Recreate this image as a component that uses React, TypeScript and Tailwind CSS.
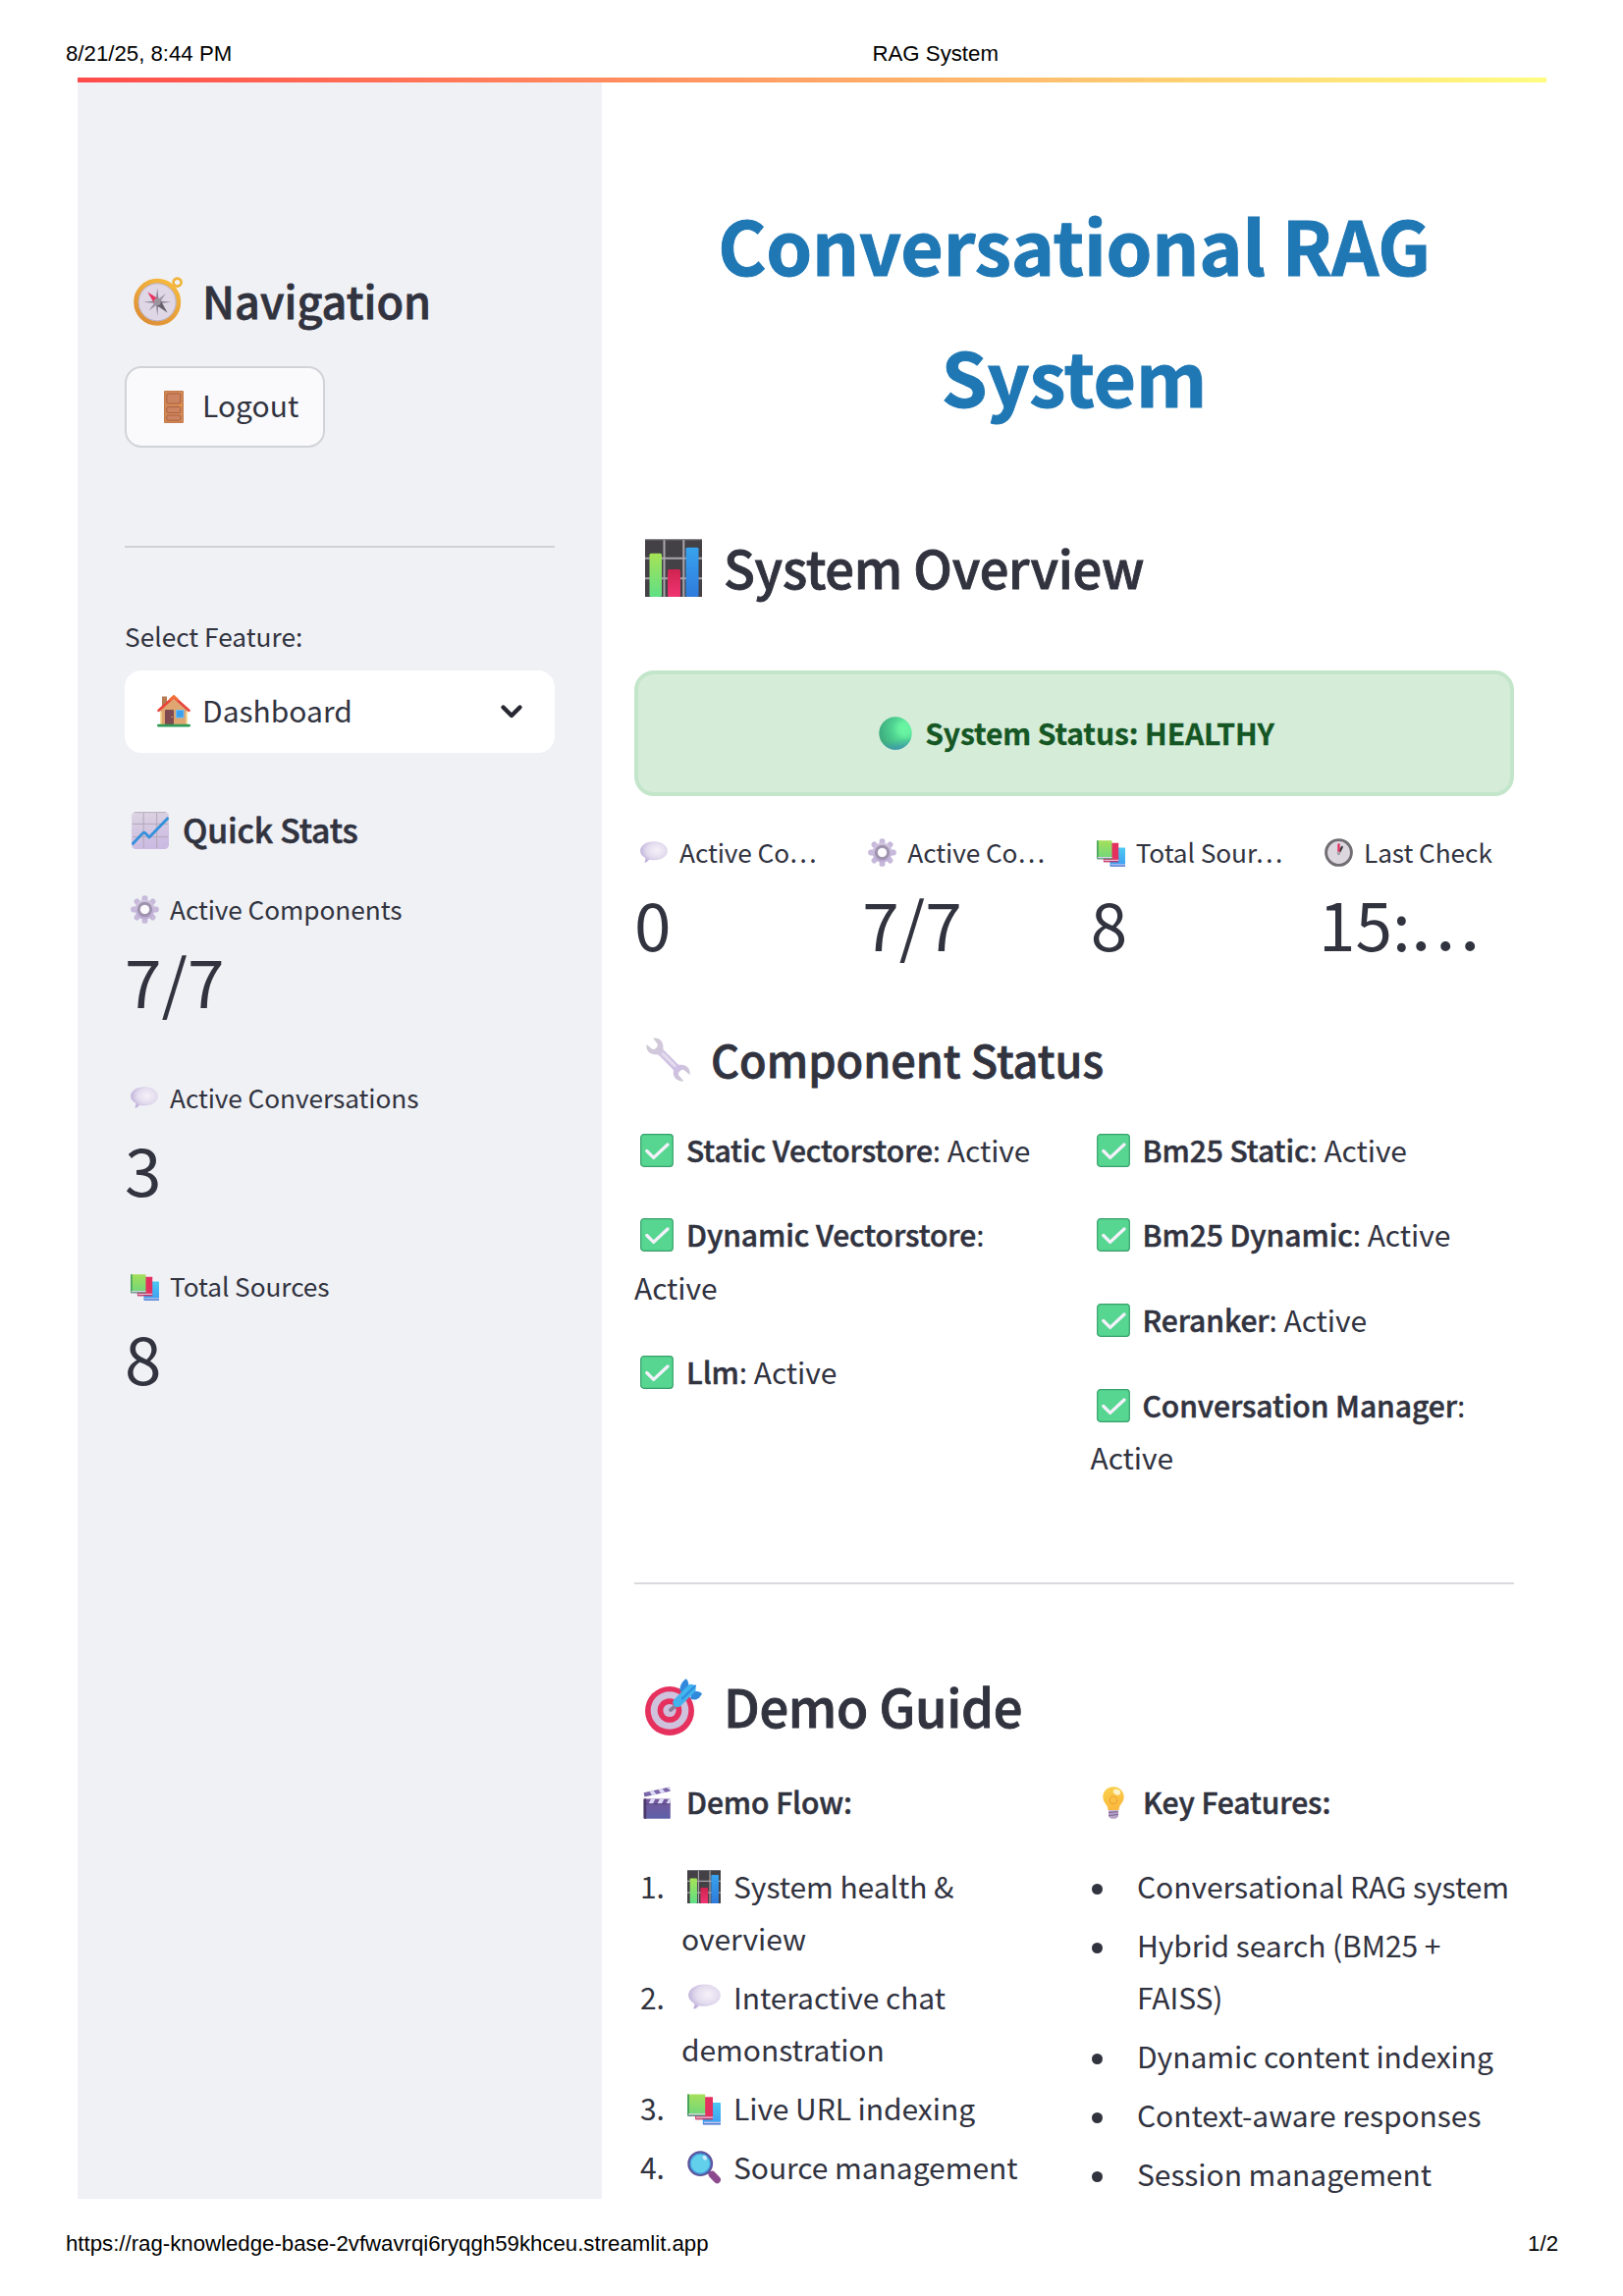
import React from "react";

type IconProps = { className?: string };

function Compass({ className }: IconProps) {
  return (
    <svg viewBox="0 0 50 50" className={className} fill="none">
      <defs>
        <linearGradient id="cmp" x1="0.8" y1="0" x2="0.2" y2="1">
          <stop offset="0" stopColor="#f6b93c" />
          <stop offset="1" stopColor="#dd8d35" />
        </linearGradient>
      </defs>
      <circle cx="44.6" cy="5.6" r="4" stroke="#f0b336" strokeWidth="2.6" />
      <circle cx="24.2" cy="25.8" r="21.7" fill="#dfd6e6" stroke="url(#cmp)" strokeWidth="4.6" />
      <circle cx="24.2" cy="25.8" r="19" stroke="#b9aebd" strokeWidth="1" />
      <path d="M24.2 11.5l1.6 12.7L24.2 40l-1.6-15.8zM10 25.8l14.2-1.5 14.2 1.5-14.2 1.5z" fill="#8f8798" />
      <path d="M33 17l-7.4 10.4L15.5 34.6l7-10.2z" fill="#a29aac" />
      <path d="M14.3 15.6l12.3 7.6-5 4.8z" fill="#e8345f" />
      <path d="M34.5 36.5l-12.6-8.4 5.4-4.8z" fill="#66616c" />
      <circle cx="24.2" cy="25.4" r="3.6" fill="#9b949f" />
    </svg>
  );
}

function Door({ className }: IconProps) {
  return (
    <svg viewBox="0 0 20 33" className={className} fill="none">
      <rect x="0" y="0" width="20" height="33" rx="1" fill="#d58a58" />
      <rect x="0.6" y="0.6" width="18.8" height="31.8" rx="0.8" stroke="#bf774b" strokeWidth="0.9" />
      <g fill="#cb8360" stroke="#a9613f" strokeWidth="1">
        <rect x="2.8" y="3" width="14" height="10" rx="1" />
        <rect x="2.8" y="16.5" width="14" height="6" rx="1" />
        <rect x="2.8" y="25" width="14" height="5.2" rx="1" />
      </g>
      <circle cx="16.8" cy="15" r="1.1" fill="#f09a2e" />
    </svg>
  );
}

function House({ className }: IconProps) {
  return (
    <svg viewBox="0 0 34 33" className={className} fill="none">
      <rect x="5" y="1.5" width="5" height="12" fill="#b77c52" />
      <path d="M3.5 14L17 2l13.5 12v17h-27z" fill="#dfa672" />
      <rect x="3" y="17" width="1.6" height="13" fill="#f4dfa0" />
      <rect x="29.4" y="17" width="1.6" height="13" fill="#f4dfa0" />
      <path d="M1.6 15.8L17 2l15.4 13.8" stroke="#e8453c" strokeWidth="2.6" strokeLinecap="round" strokeLinejoin="round" />
      <path d="M13.5 4.5L17 1.4l3.5 3.1" stroke="#f3703c" strokeWidth="2.6" strokeLinecap="round" />
      <rect x="8" y="15" width="9" height="15" rx="0.8" fill="#7d4a52" />
      <circle cx="15.2" cy="22.5" r="0.8" fill="#d6a44e" />
      <rect x="19.5" y="15.5" width="7.5" height="7.5" fill="#3ba0f2" stroke="#6ac3fb" strokeWidth="0.8" />
      <rect x="0" y="29.8" width="34" height="2.6" rx="1.3" fill="#2f9a55" />
    </svg>
  );
}

function Trend({ className }: IconProps) {
  return (
    <svg viewBox="0 0 38 38" className={className} fill="none">
      <defs>
        <linearGradient id="trd" x1="0" y1="0" x2="0.2" y2="1">
          <stop offset="0" stopColor="#ddd5e2" />
          <stop offset="1" stopColor="#cbbbe2" />
        </linearGradient>
      </defs>
      <rect width="38" height="38" rx="4.5" fill="url(#trd)" />
      <path d="M12.2 1v36M25.7 1v36M1 12.4h36M1 25.6h36" stroke="#b2a8b8" strokeWidth="1" />
      <path d="M3 .6h32" stroke="#b9afbe" strokeWidth="1" />
      <path d="M.6 33.2L11.6 21.6q1.2-1 2.4.2l4 4.2 19.4-20" stroke="#3391dc" strokeWidth="2.8" strokeLinejoin="round" />
    </svg>
  );
}

function Gear({ className }: IconProps) {
  const teeth = [0, 45, 90, 135, 180, 225, 270, 315];
  return (
    <svg viewBox="0 0 29 29" className={className} fill="none">
      <defs>
        <linearGradient id="ger" x1="0.5" y1="0" x2="0.5" y2="1">
          <stop offset="0" stopColor="#d3c9e0" />
          <stop offset="1" stopColor="#bcaad6" />
        </linearGradient>
      </defs>
      <g fill="#c6b9da">
        {teeth.map((a) => (
          <rect key={a} x="11.6" y="0.2" width="5.8" height="8" rx="2.6" transform={`rotate(${a} 14.5 14.5)`} />
        ))}
      </g>
      <circle cx="14.5" cy="14.5" r="10" fill="url(#ger)" />
      <circle cx="14.5" cy="14.5" r="6.2" stroke="#a093ae" strokeWidth="3" />
      <circle cx="14.5" cy="14.5" r="4.6" fill="#fdfbfd" />
    </svg>
  );
}

function Bubble({ className }: IconProps) {
  return (
    <svg viewBox="0 0 28 22" className={className} fill="none">
      <defs>
        <radialGradient id="bub" cx="0.6" cy="0.42" r="0.62">
          <stop offset="0" stopColor="#f5f2f9" />
          <stop offset="0.6" stopColor="#e2dbee" />
          <stop offset="1" stopColor="#bfb0d9" />
        </radialGradient>
      </defs>
      <path d="M14 .3C21.8 .3 27.9 4.5 27.9 9.8S21.8 19.3 14 19.3c-1.7 0-3.2-.2-4.6-.5-1 1-2.6 2.6-4.5 2.9-.5 0-.6-.5-.3-.9.6-.9.8-2.3.7-3.7C2 15.3.1 12.8.1 9.8.1 4.5 6.2.3 14 .3z" fill="url(#bub)" />
    </svg>
  );
}

function Books({ className }: IconProps) {
  return (
    <svg viewBox="0 0 29 27" className={className} fill="none">
      <defs>
        <linearGradient id="bkg" x1="0" y1="0" x2="0" y2="1">
          <stop offset="0" stopColor="#a5e05a" />
          <stop offset="1" stopColor="#6fd67c" />
        </linearGradient>
        <linearGradient id="bkb" x1="0" y1="0" x2="0" y2="1">
          <stop offset="0" stopColor="#4cc9f2" />
          <stop offset="1" stopColor="#3f9df2" />
        </linearGradient>
      </defs>
      <rect x="13.5" y="7.5" width="15.5" height="19" rx="0.5" fill="url(#bkb)" />
      <path d="M14.5 24.3h14.5v1.2H14.5z" fill="#cfc6ef" />
      <path d="M13.8 26.2H29" stroke="#4f6cc4" strokeWidth="0.9" />
      <rect x="6.8" y="2.7" width="15.4" height="19" rx="0.5" fill="#e4305f" />
      <path d="M7.5 19.8h14.7v1.2H7.5z" fill="#e5bcd6" />
      <path d="M7 21.9h15.2" stroke="#b32a5c" strokeWidth="0.9" />
      <rect x="0.2" y="0.2" width="15.3" height="18.6" rx="0.5" fill="url(#bkg)" />
      <path d="M.9.2v18.4" stroke="#3f9c58" strokeWidth="1.5" />
      <path d="M1 17h14.5v1.2H1z" fill="#d9d2ea" />
      <path d="M.3 18.9h15.2" stroke="#57737a" strokeWidth="0.9" />
    </svg>
  );
}

function Bars({ className }: IconProps) {
  return (
    <svg viewBox="0 0 58 58" preserveAspectRatio="none" className={className} fill="none">
      <defs>
        <linearGradient id="brg" x1="0" y1="0" x2="0" y2="1">
          <stop offset="0" stopColor="#a6e356" />
          <stop offset="1" stopColor="#5fdf85" />
        </linearGradient>
        <linearGradient id="brr" x1="0" y1="0" x2="0" y2="1">
          <stop offset="0" stopColor="#cf2350" />
          <stop offset="1" stopColor="#f03472" />
        </linearGradient>
        <linearGradient id="brb" x1="0" y1="0" x2="0" y2="1">
          <stop offset="0" stopColor="#38a3ee" />
          <stop offset="1" stopColor="#2f7bdc" />
        </linearGradient>
      </defs>
      <rect width="58" height="58" fill="#434046" />
      <path d="M19.5 1v57M39.3 1v57M0 19.5h58M0 39.5h58" stroke="#a9a5ac" strokeWidth="2" />
      <path d="M0 .7h58" stroke="#8b888e" strokeWidth="1.2" />
      <rect x="4.5" y="14.5" width="12.5" height="43.5" rx="1.5" fill="url(#brg)" />
      <rect x="23" y="30.5" width="13" height="27.5" rx="1.5" fill="url(#brr)" />
      <rect x="41.5" y="8.5" width="13" height="49.5" rx="1.5" fill="url(#brb)" />
    </svg>
  );
}

function Ball({ className }: IconProps) {
  return (
    <svg viewBox="0 0 34 34" className={className} fill="none">
      <defs>
        <radialGradient id="bal" cx="0.78" cy="0.36" r="0.75">
          <stop offset="0" stopColor="#69f7a2" />
          <stop offset="0.25" stopColor="#66f0a0" />
          <stop offset="0.5" stopColor="#50d492" />
          <stop offset="1" stopColor="#3fae80" />
        </radialGradient>
        <linearGradient id="bal2" x1="0.5" y1="0.7" x2="0.55" y2="1">
          <stop offset="0" stopColor="#3f9fb0" stopOpacity="0" />
          <stop offset="1" stopColor="#3f93b8" stopOpacity="0.8" />
        </linearGradient>
      </defs>
      <circle cx="17" cy="17" r="16.7" fill="url(#bal)" />
      <circle cx="17" cy="17" r="16.7" fill="url(#bal2)" />
    </svg>
  );
}

function Clock({ className }: IconProps) {
  return (
    <svg viewBox="0 0 29 29" className={className} fill="none">
      <circle cx="14.5" cy="14.5" r="12.9" fill="#dcd7df" stroke="#706d73" strokeWidth="2.9" />
      <path d="M14.5 15.5L17.8 9" stroke="#3c3840" strokeWidth="2.2" strokeLinecap="round" />
      <path d="M14.5 14.5V6.5" stroke="#e0315c" strokeWidth="2.4" strokeLinecap="round" />
      <circle cx="14.5" cy="15" r="1.8" fill="#a8a2ac" />
    </svg>
  );
}

function Wrench({ className }: IconProps) {
  return (
    <svg viewBox="0 0 45 45" className={className} fill="none">
      <defs>
        <linearGradient id="wrn" gradientUnits="userSpaceOnUse" x1="4" y1="4" x2="41" y2="41">
          <stop offset="0" stopColor="#cfc9d2" />
          <stop offset="0.35" stopColor="#d3c8e2" />
          <stop offset="0.75" stopColor="#cfc0e4" />
          <stop offset="1" stopColor="#cec7d2" />
        </linearGradient>
      </defs>
      <path
        d="M7 .6C12.500-.6 18 3.500 17.400 9.800c-.1 1.200-.1 2 .8 2.900l14.200 14.200c.9.900 1.700.9 2.900.8 6.200-.6 10.400 4.900 9.200 10.400l-5.300-4.600c-1.300-1.200-3-.9-4.200.3l-1 1c-1.200 1.200-1.500 2.900-.3 4.200l4.600 5.300c-5.500 1.200-11-3-10.400-9.200.1-1.200.1-2-.8-2.900L12.900 18c-.9-.9-1.700-.9-2.900-.8C3.800 17.800-.6 12.500.6 7l5 4.300c1.300 1.200 3 .9 4.200-.3l1-1c1.200-1.200 1.500-2.900.3-4.200z"
        fill="url(#wrn)"
      />
      <path d="M17 16.5L29.5 29" stroke="#e6dff0" strokeWidth="2.4" strokeLinecap="round" />
    </svg>
  );
}

function Check({ className }: IconProps) {
  return (
    <svg viewBox="0 0 34 34" className={className} fill="none">
      <rect x="0.7" y="0.7" width="32.6" height="32.6" rx="3" fill="#56d690" stroke="#38a06c" strokeWidth="1.2" />
      <path d="M6.800 17.500l6.900 6.900L28 11" stroke="#f5f1fb" strokeWidth="3.3" strokeLinecap="round" strokeLinejoin="round" />
    </svg>
  );
}

function Target({ className }: IconProps) {
  return (
    <svg viewBox="0 0 58 58" className={className} fill="none">
      <circle cx="25" cy="33" r="25" fill="#e6315e" />
      <circle cx="25" cy="32.5" r="19.3" fill="#cfc2dd" />
      <circle cx="25" cy="32.5" r="12.3" fill="#e6315e" />
      <circle cx="25" cy="32.5" r="6.6" fill="#cdbfdc" />
      <path d="M26 32l7-6" stroke="#8c7c98" strokeWidth="4" strokeLinecap="round" />
      <path d="M35.500 12.500C35 8.500 37.500 3 41.500.3c2 .8 3 4.200 3.200 9l-4 7z" fill="#3189dc" />
      <path d="M46 20.500c4 2.200 9 1.300 12-5.200-1.800-2.200-6-3-10.500-2.300z" fill="#3189dc" />
      <path d="M33 24.500L47 10.500" stroke="#41b4ee" strokeWidth="9.5" strokeLinecap="round" />
      <path d="M38 20.500L51 7.500" stroke="#2f8ade" strokeWidth="2.2" strokeLinecap="round" />
    </svg>
  );
}

function Clapper({ className }: IconProps) {
  return (
    <svg viewBox="0 0 28 33" className={className} fill="none">
      <defs>
        <linearGradient id="clp" x1="0" y1="0" x2="0" y2="1">
          <stop offset="0" stopColor="#77579c" />
          <stop offset="1" stopColor="#5d60a8" />
        </linearGradient>
      </defs>
      <path d="M.6 6.200L27 .4l.7 4.300L1.400 10.600z" fill="#7a66a8" />
      <path d="M6.500 4.900l4-.9 3 4-4.400 1zM15.500 2.900l4-.9 3 4-4.400 1zM24 1.100l3-.6.5 3.600z" fill="#dcdaf6" />
      <rect x="0.6" y="12.6" width="27.2" height="20.2" rx="0.8" fill="url(#clp)" />
      <path d="M8 12.600h4.500l-2.500 4.800H5.500zM17 12.600h4.500L19 17.400h-4.500zM26 12.600h1.800v3.400l-.8 1.400h-3.500z" fill="#dcdaf6" />
      <path d="M.6 12.600h2.600v20.200H1.400q-.8 0-.8-.8z" fill="#4b3869" />
      <path d="M3 17.800h24.800" stroke="#4f3f78" strokeWidth="0.8" />
    </svg>
  );
}

function Bulb({ className }: IconProps) {
  return (
    <svg viewBox="0 0 22 33" className={className} fill="none">
      <defs>
        <linearGradient id="blb" x1="0.3" y1="0" x2="0.6" y2="1">
          <stop offset="0" stopColor="#f9cf4a" />
          <stop offset="1" stopColor="#fbb83e" />
        </linearGradient>
      </defs>
      <path d="M11 .2C17 .2 21.700 4.800 21.700 10.500c0 4.200-2.500 6.600-4 9-.8 1.300-1 2.600-1.200 4.500h-11c-.2-1.900-.4-3.200-1.200-4.500-1.500-2.400-4-4.800-4-9C.300 4.800 5 .2 11 .2z" fill="url(#blb)" />
      <circle cx="11" cy="13.8" r="3.8" stroke="#f2a038" strokeWidth="1.2" />
      <ellipse cx="14.5" cy="5.6" rx="3.8" ry="2.8" fill="#fdf3c8" transform="rotate(25 14.5 5.6)" />
      <path d="M6 24.200h10v6.300l-2.500 2.300h-5L6 30.500z" fill="#b6a2c6" />
      <path d="M6 26.600l10-1M6 29.600l10-1.200" stroke="#86709c" strokeWidth="1.1" />
    </svg>
  );
}

function Magnifier({ className }: IconProps) {
  return (
    <svg viewBox="0 0 34 34" className={className} fill="none">
      <path d="M20.500 20.500l4 4" stroke="#6d4f9a" strokeWidth="3.5" />
      <path d="M25.500 24.500l4.800 5" stroke="#8b4a8e" strokeWidth="7.4" strokeLinecap="round" />
      <circle cx="13.2" cy="13.2" r="11.7" fill="#62d0ea" stroke="#5b559c" strokeWidth="2.4" />
      <circle cx="13.2" cy="13.2" r="10" stroke="#3f9de0" strokeWidth="1.2" />
      <ellipse cx="17.8" cy="7.2" rx="2" ry="2.6" fill="#c9ecf8" transform="rotate(-35 17.8 7.2)" />
    </svg>
  );
}

const semibold = "font-medium [-webkit-text-stroke:0.017em]";
const bodyIcon = "inline-block align-[-5px] ml-[6px] mr-[13px] w-[34px] h-[34px]";
const labelIcon = {
  square: "inline-block align-[-4px] ml-[6px] mr-[11px] w-[29px] h-[29px]",
  bubble: "inline-block align-[0px] ml-[6px] mr-[12px] w-[28px] h-[22px]",
  books: "inline-block align-[-4px] ml-[6px] mr-[11px] w-[29px] h-[27px]",
};

function Metric({ icon, label, value }: { icon: React.ReactNode; label: string; value: React.ReactNode }) {
  return (
    <div>
      <div className="h-[40px] whitespace-nowrap text-[26.25px] leading-[40px] tracking-[-0.08px]">
        {icon}
        {label}
      </div>
      <div className="mt-[7px] h-[90px] whitespace-nowrap text-[67.5px] leading-[90px]">{value}</div>
    </div>
  );
}

// The CJK face centres a lone ellipsis vertically, so it is lowered to the baseline.
function TruncatedTime({ children }: { children: string }) {
  return (
    <>
      {children}
      <span className="relative -left-[2px] top-[24px] text-[75px] leading-none">…</span>
    </>
  );
}

function Component({ name, wrap }: { name: string; wrap?: boolean }) {
  return (
    <p>
      <Check className={bodyIcon} />
      <strong className={semibold}>{name}</strong>:{wrap ? <br /> : " "}Active
    </p>
  );
}

const features = [
  ["Conversational RAG system"],
  ["Hybrid search (BM25 +", "FAISS)"],
  ["Dynamic content indexing"],
  ["Context-aware responses"],
  ["Session management"],
];

export default function App() {
  return (
    <div lang="en" className="flex h-[2339px] w-[1653px] flex-col bg-white font-['Noto_Sans_CJK_SC',sans-serif] text-[#31333f]">
      <header className="flex h-[79px] shrink-0 pl-[67px] pt-[40px] font-['Liberation_Sans',sans-serif] text-[22.22px] leading-[30px] text-black">
        <span className="w-[821.5px]">8/21/25, 8:44 PM</span>
        <span>RAG System</span>
      </header>

      <div className="ml-[79px] h-[5px] w-[1496px] shrink-0 bg-[linear-gradient(90deg,#ff4b4b,#fffd80)]" />

      <div className="ml-[79px] flex h-[2156px] w-[1496px] shrink-0">
        <aside className="w-[533.5px] shrink-0 bg-[#f0f1f5] px-[48px] pt-[191.5px]">
          <h2 className={`${semibold} h-[60px] whitespace-nowrap text-[45px] leading-[60px]`}>
            <Compass className="mr-[20px] ml-[9px] inline-block h-[50px] w-[50px] align-[-7px]" />
            Navigation
          </h2>
          <button className="mt-[37.5px] flex h-[83px] w-[204px] items-center rounded-[17px] border-2 border-[#d2d3d8] bg-[#fafafc] pb-[4px] text-[30px]">
            <Door className="ml-[38px] mr-[19px] mt-[3px] h-[33px] w-[20px]" />
            Logout
          </button>
          <hr className="mt-[100px] border-t-[2.5px] border-[#d1d1d8]" />
          <p className="mt-[69.5px] h-[40px] text-[26.25px] leading-[40px]">Select Feature:</p>
          <div className="mt-[15.5px] flex h-[83.5px] items-center rounded-[17px] bg-white pl-[33px] pr-[32px] text-[30px]">
            <House className="mr-[12px] h-[33px] w-[34px]" />
            <span className="-mt-[2px] grow">Dashboard</span>
            <svg viewBox="0 0 24 16" className="h-[16px] w-[24px]" fill="none">
              <path d="M3.5 3.5L12 12l8.5-8.5" stroke="#262730" strokeWidth="4.4" strokeLinecap="round" strokeLinejoin="round" />
            </svg>
          </div>
          <h3 className={`${semibold} mt-[55px] h-[46px] whitespace-nowrap text-[33.75px] leading-[46px] tracking-[-0.2px]`}>
            <Trend className="ml-[7px] mr-[14px] inline-block h-[38px] w-[38px] align-[-6px]" />
            Quick Stats
          </h3>
          <div className="mt-[38.9px] flex flex-col gap-[54.6px]">
            <Metric icon={<Gear className={labelIcon.square} />} label="Active Components" value="7/7" />
            <Metric icon={<Bubble className={labelIcon.bubble} />} label="Active Conversations" value="3" />
            <Metric icon={<Books className={labelIcon.books} />} label="Total Sources" value="8" />
          </div>
        </aside>

        <main className="w-[962.5px] shrink-0 pl-[33.5px] pr-[33px] pt-[98px]">
          <h1 className="text-center text-[75px] font-bold leading-[133.5px] tracking-[-0.15px] text-[#1f77b4] [-webkit-text-stroke:1px_#1f77b4]">
            Conversational RAG
            <br />
            System
          </h1>
          <h2 className={`${semibold} mt-[93px] h-[70px] whitespace-nowrap text-[52.5px] leading-[70px] tracking-[-0.3px]`}>
            <Bars className="ml-[11px] mr-[22px] inline-block h-[59px] w-[58px] align-[-8px]" />
            System Overview
          </h2>
          <div className="mt-[71px] h-[128px] rounded-[20px] border-[4.5px] border-[#c3e6cb] bg-[#d5ecd9] text-center text-[30px] font-bold leading-[118px] tracking-[-0.1px] text-[#155724] [-webkit-text-stroke:0.3px_#155724]">
            <Ball className="ml-[5px] mr-[13px] inline-block h-[34px] w-[34px] align-[-5px]" />
            System Status: HEALTHY
          </div>
          <div className="mt-[37px] grid grid-cols-4 gap-x-[33.3px]">
            <Metric icon={<Bubble className={labelIcon.bubble} />} label="Active Co…" value="0" />
            <Metric icon={<Gear className={labelIcon.square} />} label="Active Co…" value="7/7" />
            <Metric icon={<Books className={labelIcon.books} />} label="Total Sour…" value="8" />
            <Metric icon={<Clock className={labelIcon.square} />} label="Last Check" value={<TruncatedTime>15:</TruncatedTime>} />
          </div>
          <h2 className={`${semibold} mt-[64.4px] h-[60px] whitespace-nowrap text-[45px] leading-[60px]`}>
            <Wrench className="ml-[12px] mr-[21px] inline-block h-[45px] w-[45px] align-[-4px]" />
            Component Status
          </h2>
          <div className="mt-[35.4px] grid h-[388px] grid-cols-2 text-[30px] leading-[53.3px] tracking-[-0.06px]">
            <div className="flex flex-col gap-[33.3px]">
              <Component name="Static Vectorstore" />
              <Component name="Dynamic Vectorstore" wrap />
              <Component name="Llm" />
            </div>
            <div className="flex flex-col gap-[33.3px] pl-[16.5px]">
              <Component name="Bm25 Static" />
              <Component name="Bm25 Dynamic" />
              <Component name="Reranker" />
              <Component name="Conversation Manager" wrap />
            </div>
          </div>
          <hr className="mt-[79.6px] border-t-[2.5px] border-[#d9dadd]" />
          <h2 className={`${semibold} mt-[88px] h-[70px] whitespace-nowrap text-[52.5px] leading-[70px] tracking-[-0.3px]`}>
            <Target className="ml-[11px] mr-[22px] inline-block h-[58px] w-[58px] align-[-8px]" />
            Demo Guide
          </h2>
          <div className="mt-[36.2px] grid grid-cols-2 text-[30px] leading-[53.3px] tracking-[-0.06px]">
            <div>
              <p className={semibold}>
                <Clapper className="ml-[9px] mr-[16px] inline-block h-[33px] w-[28px] align-[-5px]" />
                Demo Flow:
              </p>
              <ol className="mt-[33px] flex flex-col gap-[6.7px]">
                <li className="flex">
                  <span className="w-[48px] pl-[6px]">1.</span>
                  <span>
                    <Bars className={bodyIcon} />
                    System health &amp;
                    <br />
                    overview
                  </span>
                </li>
                <li className="flex">
                  <span className="w-[48px] pl-[6px]">2.</span>
                  <span>
                    <Bubble className="ml-[7px] mr-[13px] inline-block h-[26px] w-[33px] align-[0px]" />
                    Interactive chat
                    <br />
                    demonstration
                  </span>
                </li>
                <li className="flex">
                  <span className="w-[48px] pl-[6px]">3.</span>
                  <span>
                    <Books className="ml-[6px] mr-[13px] inline-block h-[32px] w-[34px] align-[-5px]" />
                    Live URL indexing
                  </span>
                </li>
                <li className="flex">
                  <span className="w-[48px] pl-[6px]">4.</span>
                  <span>
                    <Magnifier className={bodyIcon} />
                    Source management
                  </span>
                </li>
              </ol>
            </div>
            <div className="pl-[17px]">
              <p className={semibold}>
                <Bulb className="ml-[12px] mr-[19px] inline-block h-[33px] w-[22px] align-[-5px]" />
                Key Features:
              </p>
              <ul className="mt-[33px] flex flex-col gap-[6.7px] whitespace-nowrap">
                {features.map((lines) => (
                  <li key={lines[0]} className="flex">
                    <span className="ml-[1px] mr-[35px] mt-[24px] h-[11px] w-[11px] shrink-0 rounded-full bg-[#31333f]" />
                    <span>
                      {lines.map((line) => (
                        <span key={line} className="block">
                          {line}
                        </span>
                      ))}
                    </span>
                  </li>
                ))}
              </ul>
            </div>
          </div>
        </main>
      </div>

      <footer className="mt-[31px] flex justify-between pl-[67px] pr-[66px] font-['Liberation_Sans',sans-serif] text-[22.22px] leading-[30px] text-black">
        <span>https://rag-knowledge-base-2vfwavrqi6ryqgh59khceu.streamlit.app</span>
        <span>1/2</span>
      </footer>
    </div>
  );
}
